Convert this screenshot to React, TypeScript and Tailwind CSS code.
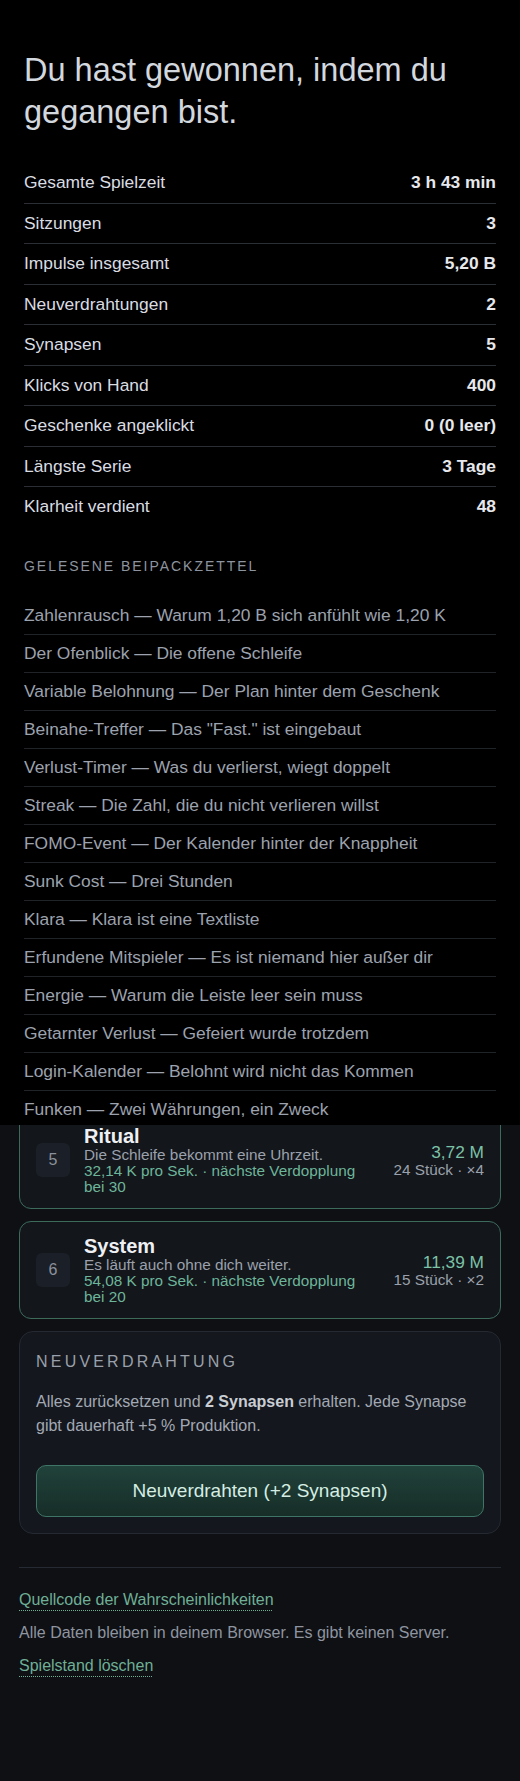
import React from "react";

const stats: [string, string][] = [
  ["Gesamte Spielzeit", "3 h 43 min"],
  ["Sitzungen", "3"],
  ["Impulse insgesamt", "5,20 B"],
  ["Neuverdrahtungen", "2"],
  ["Synapsen", "5"],
  ["Klicks von Hand", "400"],
  ["Geschenke angeklickt", "0 (0 leer)"],
  ["Längste Serie", "3 Tage"],
  ["Klarheit verdient", "48"],
];

const leaflets = [
  "Zahlenrausch — Warum 1,20 B sich anfühlt wie 1,20 K",
  "Der Ofenblick — Die offene Schleife",
  "Variable Belohnung — Der Plan hinter dem Geschenk",
  'Beinahe-Treffer — Das "Fast." ist eingebaut',
  "Verlust-Timer — Was du verlierst, wiegt doppelt",
  "Streak — Die Zahl, die du nicht verlieren willst",
  "FOMO-Event — Der Kalender hinter der Knappheit",
  "Sunk Cost — Drei Stunden",
  "Klara — Klara ist eine Textliste",
  "Erfundene Mitspieler — Es ist niemand hier außer dir",
  "Energie — Warum die Leiste leer sein muss",
  "Getarnter Verlust — Gefeiert wurde trotzdem",
  "Login-Kalender — Belohnt wird nicht das Kommen",
  "Funken — Zwei Währungen, ein Zweck",
];

type Generator = {
  n: number;
  name: string;
  desc: string;
  rate: string;
  value: string;
  count: string;
};

const generators: Generator[] = [
  {
    n: 5,
    name: "Ritual",
    desc: "Die Schleife bekommt eine Uhrzeit.",
    rate: "32,14 K pro Sek. · nächste Verdopplung bei 30",
    value: "3,72 M",
    count: "24 Stück · ×4",
  },
  {
    n: 6,
    name: "System",
    desc: "Es läuft auch ohne dich weiter.",
    rate: "54,08 K pro Sek. · nächste Verdopplung bei 20",
    value: "11,39 M",
    count: "15 Stück · ×2",
  },
];

function GeneratorCard({ g }: { g: Generator }) {
  return (
    <div className="flex items-center gap-4 rounded-xl border border-[#3c6b5c] bg-[#13161b] px-4 py-[13px]">
      <div className="flex h-[34px] w-[34px] shrink-0 items-center justify-center rounded-md bg-[#1b1f27] text-[16px] text-[#8b919c]">
        {g.n}
      </div>
      <div className="-ml-[2px] min-w-0 flex-1">
        <div className="text-[20px] font-bold leading-[22px] text-[#eef0f3]">{g.name}</div>
        <div className="text-[15.3px] leading-[16px] text-[#9ba1ac]">{g.desc}</div>
        <div className="text-[15.3px] leading-[16px] text-[#6db59a]">{g.rate}</div>
      </div>
      <div className="shrink-0 whitespace-nowrap text-right">
        <div className="text-[17.3px] leading-[18px] text-[#7cc2a7]">{g.value}</div>
        <div className="text-[15.3px] leading-[17px] text-[#9ba1ac]">{g.count}</div>
      </div>
    </div>
  );
}

function EndOverlay() {
  return (
    <div className="absolute inset-x-0 top-0 h-[1125px] overflow-hidden bg-black px-6 pt-[49px]">
      <h1 className="text-[32.5px] leading-[42px] font-normal text-[#d3d7de]">
        Du hast gewonnen, indem du gegangen bist.
      </h1>

      <dl className="mt-[30px]">
        {stats.map(([label, value], i) => (
          <div
            key={label}
            className={
              "flex items-center justify-between py-[10px] text-[17.4px] leading-[19.5px] " +
              (i < stats.length - 1 ? "border-b border-[#2b2e34]" : "")
            }
          >
            <dt className="text-[#d9dce2]">{label}</dt>
            <dd className="font-bold text-[#e6e8ec]">{value}</dd>
          </div>
        ))}
      </dl>

      <h2 className="mt-[29px] text-[14px] leading-[20px] tracking-[0.14em] uppercase text-[#8e949f]">
        Gelesene Beipackzettel
      </h2>

      <ul className="mt-[21px]">
        {leaflets.map((t, i) => (
          <li
            key={t}
            className={
              "py-[9px] text-[17.4px] leading-[19px] text-[#9ca2ae] " +
              (i < leaflets.length - 1 ? "border-b border-[#202328]" : "")
            }
          >
            {t}
          </li>
        ))}
      </ul>
    </div>
  );
}

export default function App() {
  return (
    <div className="relative min-h-screen bg-[#0e1014] font-['Liberation_Sans',Arial,sans-serif]">
      <main className="px-[19px] pt-[1111px] pb-20">
        <div className="flex flex-col gap-3">
          {generators.map((g) => (
            <GeneratorCard key={g.n} g={g} />
          ))}
        </div>

        <section className="mt-3 rounded-[14px] border border-[#252932] bg-[#14171d] px-4 pt-[18px] pb-4">
          <h3 className="text-[16px] leading-[24px] tracking-[0.2em] uppercase text-[#9aa0ab]">
            Neuverdrahtung
          </h3>
          <p className="mt-4 text-[16px] leading-[24px] text-[#a3a9b4]">
            Alles zurücksetzen und <b className="font-bold text-[#c9cdd4]">2 Synapsen</b> erhalten. Jede Synapse
            gibt dauerhaft +5 % Produktion.
          </p>
          <button className="mt-[27px] h-[52px] w-full rounded-[10px] border border-[#3f7566] bg-gradient-to-b from-[#20423a] to-[#172d28] text-[19px] text-[#d5ede3]">
            Neuverdrahten (+2 Synapsen)
          </button>
        </section>

        <footer className="mt-[33px] border-t border-[#262a33] pt-5">
          <a className="text-[16px] leading-[24px] text-[#6faf96] underline decoration-dotted decoration-1 underline-offset-[5px]">
            Quellcode der Wahrscheinlichkeiten
          </a>
          <p className="mt-[9px] text-[16px] leading-[24px] text-[#8f95a0]">
            Alle Daten bleiben in deinem Browser. Es gibt keinen Server.
          </p>
          <a className="mt-[9px] inline-block text-[16px] leading-[24px] text-[#6faf96] underline decoration-dotted decoration-1 underline-offset-[5px]">
            Spielstand löschen
          </a>
        </footer>
      </main>

      <EndOverlay />
    </div>
  );
}
